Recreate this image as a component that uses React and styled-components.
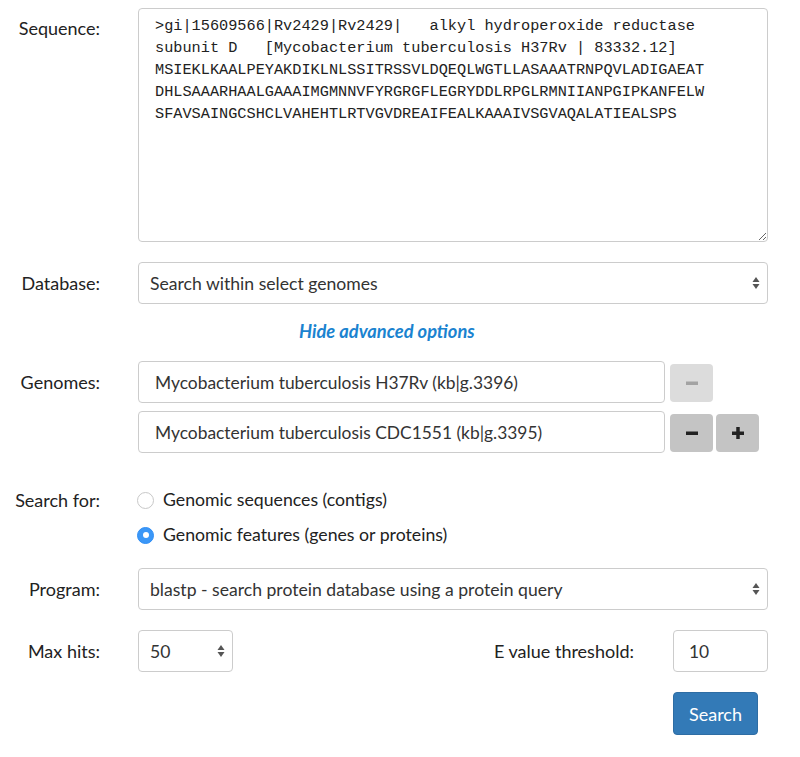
import React from "react";
import styled, { createGlobalStyle } from "styled-components";

const GlobalStyle = createGlobalStyle`
  body {
    margin: 8px;
    font-family: Lato, "Open Sans", sans-serif;
    color: #222;
    background: #fff;
  }
  * { box-sizing: border-box; }
`;

const Form = styled.form`
  width: 760px;
`;

const Row = styled.div`
  display: grid;
  grid-template-columns: 130px 1fr;
  align-items: ${(p) => p.$align || "center"};
  margin-top: ${(p) => p.$top || 0}px;
`;

const Label = styled.label`
  text-align: right;
  padding-right: 38px;
  padding-top: ${(p) => p.$padTop || 0}px;
  font-size: 18px;
  line-height: 24px;
  color: #222;
`;

const SequenceBox = styled.textarea`
  display: block;
  width: 630px;
  height: 234px;
  margin: 0;
  padding: 6px 16px;
  border: 1px solid #ccc;
  border-radius: 4px;
  font-family: "Liberation Mono", "Courier New", monospace;
  font-size: 15.25px;
  line-height: 22px;
  color: #222;
  white-space: pre;
  overflow: hidden;
  resize: vertical;
  outline: none;
`;

const SelectWrap = styled.div`
  position: relative;
  width: ${(p) => p.$width || "630px"};
`;

const Select = styled.select`
  display: block;
  width: 100%;
  height: 42px;
  padding: 0 11px;
  border: 1px solid #ccc;
  border-radius: 4px;
  background: #fff;
  font-family: inherit;
  font-size: 17.6px;
  color: #333;
  appearance: none;
  -webkit-appearance: none;
  outline: none;
`;

const Arrows = styled.svg`
  position: absolute;
  right: 6px;
  top: 50%;
  transform: translateY(-50%);
  pointer-events: none;
`;

const AdvancedLink = styled.a`
  display: block;
  margin: 16px 0 0 291px;
  font-size: 18.3px;
  line-height: 22px;
  font-weight: 700;
  font-style: italic;
  color: #1a83d0;
  text-decoration: none;
`;

const GenomeList = styled.div`
  display: flex;
  flex-direction: column;
  gap: 8px;
`;

const GenomeRow = styled.div`
  display: grid;
  grid-template-columns: 527px 43px 43px;
  column-gap: 4px;
  align-items: center;
`;

const TextInput = styled.input`
  display: block;
  width: ${(p) => p.$width || "100%"};
  height: 42px;
  padding: 0 ${(p) => p.$padX || 16}px;
  border: 1px solid #ccc;
  border-radius: 4px;
  font-family: inherit;
  font-size: 17.4px;
  color: #333;
  outline: none;
`;

const IconButton = styled.button`
  height: 38px;
  width: 43px;
  margin-top: 2px;
  margin-left: ${(p) => (p.$first ? 1 : 0)}px;
  border: none;
  border-radius: 4px;
  background: ${(p) => (p.disabled ? "#dcdcdc" : "#c4c4c4")};
  color: ${(p) => (p.disabled ? "#a3a3a3" : "#222")};
  display: flex;
  align-items: center;
  justify-content: center;
  padding: 0;
`;

const RadioGroup = styled.div`
  display: flex;
  flex-direction: column;
  gap: 11px;
`;

const RadioOption = styled.label`
  display: flex;
  align-items: center;
  gap: 9px;
  font-size: 17.7px;
  line-height: 24px;
  color: #222;
`;

const RadioDot = styled.span`
  width: 17px;
  height: 17px;
  margin-left: -1px;
  border-radius: 50%;
  border: 1px solid ${(p) => (p.$checked ? "#2f8ef5" : "#c8c8c8")};
  background: ${(p) => (p.$checked ? "#3b97f7" : "#fff")};
  display: flex;
  align-items: center;
  justify-content: center;

  &::after {
    content: "";
    width: 6px;
    height: 6px;
    border-radius: 50%;
    background: #fff;
    display: ${(p) => (p.$checked ? "block" : "none")};
  }
`;

const HitsRow = styled.div`
  display: flex;
  align-items: center;
`;

const EValueLabel = styled.label`
  margin-left: auto;
  margin-right: 39px;
  font-size: 18px;
  color: #222;
`;

const Actions = styled.div`
  display: flex;
  justify-content: flex-end;
  padding-right: 10px;
  margin-top: 20px;
`;

const SearchButton = styled.button`
  width: 85px;
  height: 43px;
  border: 1px solid #2e6da4;
  border-radius: 4px;
  background: #337ab7;
  color: #fff;
  font-family: inherit;
  font-size: 18px;
  padding: 0;
`;

const sequence = `>gi|15609566|Rv2429|Rv2429|   alkyl hydroperoxide reductase
subunit D   [Mycobacterium tuberculosis H37Rv | 83332.12]
MSIEKLKAALPEYAKDIKLNLSSITRSSVLDQEQLWGTLLASAAATRNPQVLADIGAEAT
DHLSAAARHAALGAAAIMGMNNVFYRGRGFLEGRYDDLRPGLRMNIIANPGIPKANFELW
SFAVSAINGCSHCLVAHEHTLRTVGVDREAIFEALKAAAIVSGVAQALATIEALSPS`;

const genomes = [
  "Mycobacterium tuberculosis H37Rv (kb|g.3396)",
  "Mycobacterium tuberculosis CDC1551 (kb|g.3395)",
];

function UpDown() {
  return (
    <Arrows width="12" height="16" viewBox="0 0 12 16">
      <path d="M6 2 L9.5 7 L2.5 7 Z" fill="#555" />
      <path d="M6 14 L9.5 9 L2.5 9 Z" fill="#555" />
    </Arrows>
  );
}

function Minus() {
  return (
    <svg width="14" height="14" viewBox="0 0 14 14">
      <rect x="1" y="5.5" width="12" height="3.5" fill="currentColor" />
    </svg>
  );
}

function Plus() {
  return (
    <svg width="14" height="14" viewBox="0 0 14 14">
      <rect x="1" y="5.5" width="12" height="3.5" fill="currentColor" />
      <rect x="5.25" y="1" width="3.5" height="12" fill="currentColor" />
    </svg>
  );
}

export default function App() {
  return (
    <>
      <GlobalStyle />
      <Form onSubmit={(e) => e.preventDefault()}>
        <Row $align="start">
          <Label $padTop={8}>Sequence:</Label>
          <SequenceBox defaultValue={sequence} spellCheck={false} />
        </Row>

        <Row $top={20}>
          <Label>Database:</Label>
          <SelectWrap>
            <Select defaultValue="select">
              <option value="select">Search within select genomes</option>
            </Select>
            <UpDown />
          </SelectWrap>
        </Row>

        <AdvancedLink href="#">Hide advanced options</AdvancedLink>

        <Row $align="start" $top={19}>
          <Label $padTop={9}>Genomes:</Label>
          <GenomeList>
            {genomes.map((g, i) => (
              <GenomeRow key={g}>
                <TextInput defaultValue={g} readOnly />
                <IconButton type="button" $first disabled={genomes.length > 1 && i === 0}>
                  <Minus />
                </IconButton>
                {i === genomes.length - 1 && (
                  <IconButton type="button">
                    <Plus />
                  </IconButton>
                )}
              </GenomeRow>
            ))}
          </GenomeList>
        </Row>

        <Row $align="start" $top={35}>
          <Label>Search for:</Label>
          <RadioGroup>
            <RadioOption>
              <RadioDot />
              Genomic sequences (contigs)
            </RadioOption>
            <RadioOption>
              <RadioDot $checked />
              Genomic features (genes or proteins)
            </RadioOption>
          </RadioGroup>
        </Row>

        <Row $top={21}>
          <Label>Program:</Label>
          <SelectWrap>
            <Select defaultValue="blastp">
              <option value="blastp">blastp - search protein database using a protein query</option>
            </Select>
            <UpDown />
          </SelectWrap>
        </Row>

        <Row $top={20}>
          <Label>Max hits:</Label>
          <HitsRow>
            <SelectWrap $width="95px">
              <Select defaultValue="50">
                <option value="50">50</option>
              </Select>
              <UpDown />
            </SelectWrap>
            <EValueLabel>E value threshold:</EValueLabel>
            <TextInput $width="95px" $padX={15} defaultValue="10" />
          </HitsRow>
        </Row>

        <Actions>
          <SearchButton type="submit">Search</SearchButton>
        </Actions>
      </Form>
    </>
  );
}
